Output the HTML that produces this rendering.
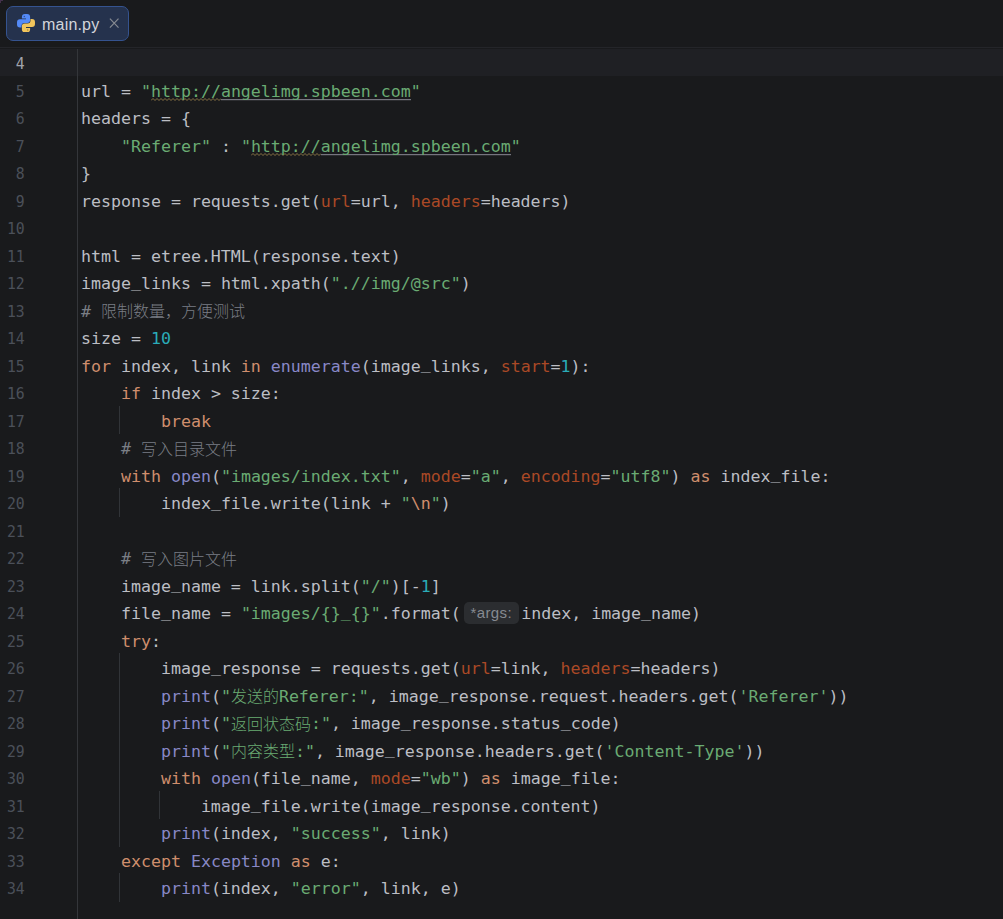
<!DOCTYPE html><html lang="zh"><head><meta charset="utf-8"><title>main.py</title><style>
html,body{margin:0;padding:0;}
body{width:1003px;height:919px;overflow:hidden;background:#191a1c;position:relative;
 font-family:"DejaVu Sans Mono", "Liberation Mono", "Noto Sans CJK SC", monospace;font-size:16.6px;color:#bcbec4;}
#tabs{position:absolute;left:0;top:0;width:1003px;height:47px;background:#191a1c;border-bottom:1px solid #242529;}
#tab{position:absolute;left:6px;top:6px;width:123px;height:35px;box-sizing:border-box;border:1px solid #35538f;border-radius:7px;background:#25324d;}
#tab svg.py{position:absolute;left:10px;top:6.800px;}
#tab .nm{position:absolute;left:35px;top:0.5px;line-height:33px;font-family:"Liberation Sans",sans-serif;font-size:16px;color:#d3d5db;letter-spacing:0.2px;}
#tab svg.x{position:absolute;left:100px;top:9px;}
#cur{position:absolute;left:0;top:49px;width:1003px;height:27px;background:#1f2024;}
#sep{position:absolute;left:77px;top:49px;width:1px;height:870px;background:#34363a;}
.ln{position:absolute;left:0;width:24.7px;transform:scaleX(0.89);transform-origin:right center;text-align:right;height:27.5px;line-height:27.5px;color:#4b5059;white-space:pre;}
.ln.c{color:#a1a3ab;}
.l{position:absolute;left:81px;height:27.5px;line-height:27.5px;white-space:pre;}
.g{position:absolute;width:1px;background:#313438;}
.u{position:relative;top:-2.5px;}
.str{color:#6aab73;}
.kw{color:#cf8e6d;}
.kw2{color:#aa4926;}
.num{color:#2aacb8;}
.bi{color:#8888c6;}
.com{color:#7a7e85;}
.cj{display:inline-block;font-family:"Noto Sans CJK SC",sans-serif;font-weight:300;font-size:16px;text-align:left;white-space:nowrap;vertical-align:baseline;line-height:16px;height:16px;position:relative;top:0.5px;}
.wv{position:absolute;width:70px;height:3px;}
.ul{position:absolute;height:1px;background:#76757f;box-shadow:0 1px 0 rgba(118,117,127,0.22);}
.hint{display:inline-block;width:60.5px;height:27.5px;vertical-align:top;position:relative;}
.hb{position:absolute;left:3px;top:1.5px;width:55px;height:22.5px;border-radius:5px;background:#2b2d30;color:#868a91;font-family:"Liberation Sans",sans-serif;font-size:15px;line-height:22px;text-align:center;letter-spacing:0.4px;}
</style></head><body>
<div id="tabs"><div id="tab">
<svg class="py" width="18" height="18.400" viewBox="0 0 18 18.400">
<path d="M7.900 0H10.100A3.000 3.000 0 0 1 13.100 3.000V6.100A2.800 2.800 0 0 1 10.300 8.900H7.500A3.000 3.000 0 0 0 4.500 11.900V13.400H3.000A3.000 3.000 0 0 1 0 10.400V8.300A3.000 3.000 0 0 1 3.000 5.300H9.000V4.500H4.900V3.000A3.000 3.000 0 0 1 7.900 0Z" fill="#548af7"/><circle cx="7.300" cy="2.400" r="0.750" fill="#345496"/>
<g transform="rotate(180 9 9.200)"><path d="M7.900 0H10.100A3.000 3.000 0 0 1 13.100 3.000V6.100A2.800 2.800 0 0 1 10.300 8.900H7.500A3.000 3.000 0 0 0 4.500 11.900V13.400H3.000A3.000 3.000 0 0 1 0 10.400V8.300A3.000 3.000 0 0 1 3.000 5.300H9.000V4.500H4.900V3.000A3.000 3.000 0 0 1 7.900 0Z" fill="#f2c55c"/><circle cx="7.300" cy="2.400" r="0.750" fill="#a3853f"/></g>
</svg>
<span class="nm">main.py</span>
<svg class="x" width="14" height="14" viewBox="0 0 14 14"><path d="M2.900 2.600l8.600 9.000M11.500 2.600l-8.600 9.000" stroke="#868a91" stroke-width="1.200" fill="none"/></svg>
</div></div>
<div id="cur"></div><div id="sep"></div><div style="position:absolute;left:0;top:0;width:3px;height:1px;background:#43304a"></div><div style="position:absolute;left:0;top:1px;width:1px;height:2px;background:#43304a"></div>
<svg class="wv" style="left:151px;top:98px" width="70" height="3" viewBox="0 0 70 3"><path d="M0 2.500 L2 0.500 L4 2.500 L6 0.500 L8 2.500 L10 0.500 L12 2.500 L14 0.500 L16 2.500 L18 0.500 L20 2.500 L22 0.500 L24 2.500 L26 0.500 L28 2.500 L30 0.500 L32 2.500 L34 0.500 L36 2.500 L38 0.500 L40 2.500 L42 0.500 L44 2.500 L46 0.500 L48 2.500 L50 0.500 L52 2.500 L54 0.500 L56 2.500 L58 0.500 L60 2.500 L62 0.500 L64 2.500 L66 0.500 L68 2.500 L70 0.500" fill="none" stroke="#a38b50" stroke-width="0.8"/></svg>
<div class="ul" style="left:221px;top:99px;width:190px"></div>
<svg class="wv" style="left:251px;top:153px" width="70" height="3" viewBox="0 0 70 3"><path d="M0 2.500 L2 0.500 L4 2.500 L6 0.500 L8 2.500 L10 0.500 L12 2.500 L14 0.500 L16 2.500 L18 0.500 L20 2.500 L22 0.500 L24 2.500 L26 0.500 L28 2.500 L30 0.500 L32 2.500 L34 0.500 L36 2.500 L38 0.500 L40 2.500 L42 0.500 L44 2.500 L46 0.500 L48 2.500 L50 0.500 L52 2.500 L54 0.500 L56 2.500 L58 0.500 L60 2.500 L62 0.500 L64 2.500 L66 0.500 L68 2.500 L70 0.500" fill="none" stroke="#a38b50" stroke-width="0.8"/></svg>
<div class="ul" style="left:321px;top:154px;width:190px"></div>
<div class="g" style="left:119px;top:406px;height:28px"></div>
<div class="g" style="left:119px;top:488px;height:29px"></div>
<div class="g" style="left:119px;top:653px;height:194px"></div>
<div class="g" style="left:159px;top:791px;height:28px"></div>
<div class="g" style="left:119px;top:873px;height:29px"></div>
<div class="ln c" style="top:50.0px">4</div>
<div class="l" style="top:50.0px"></div>
<div class="ln" style="top:77.5px">5</div>
<div class="l" style="top:77.5px">url = <span class="str">"<span class="wav">http://</span><span class="lnk">angelimg.spbeen.com</span>"</span></div>
<div class="ln" style="top:105.0px">6</div>
<div class="l" style="top:105.0px">headers = {</div>
<div class="ln" style="top:132.5px">7</div>
<div class="l" style="top:132.5px">    <span class="str">"Referer"</span> : <span class="str">"<span class="wav">http://</span><span class="lnk">angelimg.spbeen.com</span>"</span></div>
<div class="ln" style="top:160.0px">8</div>
<div class="l" style="top:160.0px">}</div>
<div class="ln" style="top:187.5px">9</div>
<div class="l" style="top:187.5px">response = requests.get(<span class="kw2">url</span>=url, <span class="kw2">headers</span>=headers)</div>
<div class="ln" style="top:215.0px">10</div>
<div class="l" style="top:215.0px"></div>
<div class="ln" style="top:242.5px">11</div>
<div class="l" style="top:242.5px">html = etree.HTML(response.text)</div>
<div class="ln" style="top:270.0px">12</div>
<div class="l" style="top:270.0px">image<span class="u">_</span>links = html.xpath(<span class="str">".//img/@src"</span>)</div>
<div class="ln" style="top:297.5px">13</div>
<div class="l" style="top:297.5px"><span class="com"># <span class="cj " style="width:144px">限制数量，方便测试</span></span></div>
<div class="ln" style="top:325.0px">14</div>
<div class="l" style="top:325.0px">size = <span class="num">10</span></div>
<div class="ln" style="top:352.5px">15</div>
<div class="l" style="top:352.5px"><span class="kw">for</span> index, link <span class="kw">in</span> <span class="bi">enumerate</span>(image<span class="u">_</span>links, <span class="kw2">start</span>=<span class="num">1</span>):</div>
<div class="ln" style="top:380.0px">16</div>
<div class="l" style="top:380.0px">    <span class="kw">if</span> index &gt; size:</div>
<div class="ln" style="top:407.5px">17</div>
<div class="l" style="top:407.5px">        <span class="kw">break</span></div>
<div class="ln" style="top:435.0px">18</div>
<div class="l" style="top:435.0px">    <span class="com"># <span class="cj " style="width:96px">写入目录文件</span></span></div>
<div class="ln" style="top:462.5px">19</div>
<div class="l" style="top:462.5px">    <span class="kw">with</span> <span class="bi">open</span>(<span class="str">"images/index.txt"</span>, <span class="kw2">mode</span>=<span class="str">"a"</span>, <span class="kw2">encoding</span>=<span class="str">"utf8"</span>) <span class="kw">as</span> index<span class="u">_</span>file:</div>
<div class="ln" style="top:490.0px">20</div>
<div class="l" style="top:490.0px">        index<span class="u">_</span>file.write(link + <span class="str">"<span class="kw">\n</span>"</span>)</div>
<div class="ln" style="top:517.5px">21</div>
<div class="l" style="top:517.5px"></div>
<div class="ln" style="top:545.0px">22</div>
<div class="l" style="top:545.0px">    <span class="com"># <span class="cj " style="width:96px">写入图片文件</span></span></div>
<div class="ln" style="top:572.5px">23</div>
<div class="l" style="top:572.5px">    image<span class="u">_</span>name = link.split(<span class="str">"/"</span>)[-<span class="num">1</span>]</div>
<div class="ln" style="top:600.0px">24</div>
<div class="l" style="top:600.0px">    file<span class="u">_</span>name = <span class="str">"images/{}<span class="u">_</span>{}"</span>.format(<span class="hint"><span class="hb">*args:</span></span>index, image<span class="u">_</span>name)</div>
<div class="ln" style="top:627.5px">25</div>
<div class="l" style="top:627.5px">    <span class="kw">try</span>:</div>
<div class="ln" style="top:655.0px">26</div>
<div class="l" style="top:655.0px">        image<span class="u">_</span>response = requests.get(<span class="kw2">url</span>=link, <span class="kw2">headers</span>=headers)</div>
<div class="ln" style="top:682.5px">27</div>
<div class="l" style="top:682.5px">        <span class="bi">print</span>(<span class="str">"<span class="cj " style="width:48px">发送的</span>Referer:"</span>, image<span class="u">_</span>response.request.headers.get(<span class="str">'Referer'</span>))</div>
<div class="ln" style="top:710.0px">28</div>
<div class="l" style="top:710.0px">        <span class="bi">print</span>(<span class="str">"<span class="cj " style="width:80px">返回状态码</span>:"</span>, image<span class="u">_</span>response.status<span class="u">_</span>code)</div>
<div class="ln" style="top:737.5px">29</div>
<div class="l" style="top:737.5px">        <span class="bi">print</span>(<span class="str">"<span class="cj " style="width:64px">内容类型</span>:"</span>, image<span class="u">_</span>response.headers.get(<span class="str">'Content-Type'</span>))</div>
<div class="ln" style="top:765.0px">30</div>
<div class="l" style="top:765.0px">        <span class="kw">with</span> <span class="bi">open</span>(file<span class="u">_</span>name, <span class="kw2">mode</span>=<span class="str">"wb"</span>) <span class="kw">as</span> image<span class="u">_</span>file:</div>
<div class="ln" style="top:792.5px">31</div>
<div class="l" style="top:792.5px">            image<span class="u">_</span>file.write(image<span class="u">_</span>response.content)</div>
<div class="ln" style="top:820.0px">32</div>
<div class="l" style="top:820.0px">        <span class="bi">print</span>(index, <span class="str">"success"</span>, link)</div>
<div class="ln" style="top:847.5px">33</div>
<div class="l" style="top:847.5px">    <span class="kw">except</span> <span class="bi">Exception</span> <span class="kw">as</span> e:</div>
<div class="ln" style="top:875.0px">34</div>
<div class="l" style="top:875.0px">        <span class="bi">print</span>(index, <span class="str">"error"</span>, link, e)</div>
</body></html>
